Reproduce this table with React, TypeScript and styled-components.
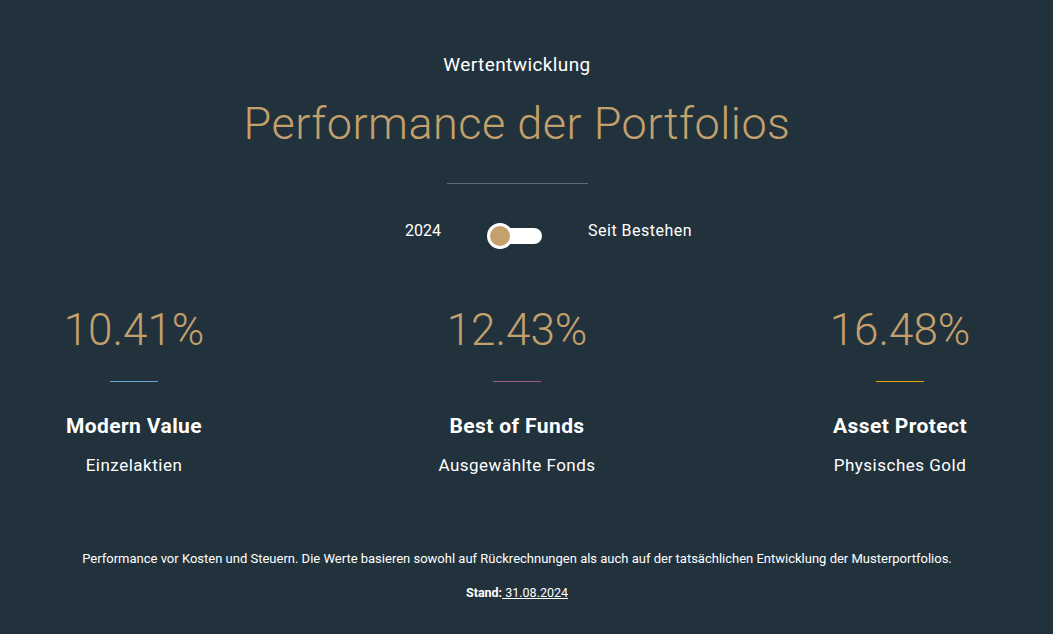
import React, { useState } from "react";
import styled, { createGlobalStyle } from "styled-components";

const GlobalStyle = createGlobalStyle`
  html, body {
    margin: 0;
    padding: 0;
    background: #22323d;
  }
  body {
    font-family: Roboto, "Noto Sans", sans-serif;
    color: #ffffff;
  }
`;

const Page = styled.main`
  width: 1034px;
  height: 634px;
  box-sizing: border-box;
  padding-top: 52px;
  display: flex;
  flex-direction: column;
  align-items: center;
  background: #22323d;
`;

const Eyebrow = styled.div`
  font-size: 19px;
  line-height: 26px;
  font-weight: 400;
  letter-spacing: 0.4px;
  color: #ffffff;
`;

const Title = styled.h1`
  margin: 18px 0 0;
  font-size: 45px;
  line-height: 56px;
  font-weight: 300;
  color: #c4a06c;
  letter-spacing: 0.5px;
`;

const Divider = styled.div`
  width: 141px;
  height: 1px;
  margin-top: 31px;
  background: #5d6b73;
`;

const ToggleRow = styled.div`
  margin-top: 39px;
  width: 100%;
  box-sizing: border-box;
  padding-right: 5px;
  display: grid;
  grid-template-columns: 1fr auto 1fr;
  align-items: start;
  font-size: 16px;
`;

const ToggleLabel = styled.span<{ $side: "left" | "right" }>`
  color: #ffffff;
  line-height: 16px;
  justify-self: ${(p) => (p.$side === "left" ? "end" : "start")};
  letter-spacing: ${(p) => (p.$side === "left" ? "0" : "0.5px")};
`;

const Switch = styled.button`
  position: relative;
  width: 56px;
  height: 26px;
  margin: 0 45px 0 46px;
  padding: 0;
  border: none;
  background: transparent;
  cursor: pointer;

  &::before {
    content: "";
    position: absolute;
    left: 1px;
    right: 1px;
    top: 5px;
    height: 16px;
    border-radius: 8px;
    background: #ffffff;
  }
`;

const Knob = styled.span<{ $on: boolean }>`
  position: absolute;
  top: 0;
  left: ${(p) => (p.$on ? "30px" : "0px")};
  width: 20px;
  height: 20px;
  border-radius: 50%;
  border: 3px solid #ffffff;
  background: #c4a06c;
  transition: left 0.2s;
`;

const Stats = styled.section`
  margin-top: 54px;
  width: 100%;
  box-sizing: border-box;
  padding: 0 14px;
  display: grid;
  grid-template-columns: repeat(3, 240px);
  column-gap: 143px;
`;

const Stat = styled.div`
  display: flex;
  flex-direction: column;
  align-items: center;
`;

const Value = styled.div`
  font-size: 44px;
  line-height: 54px;
  font-weight: 300;
  color: #c4a06c;
`;

const accentColors = {
  blue: "#6aa3d8",
  plum: "#a05a82",
  gold: "#e8a600",
};

const Accent = styled.div<{ $tone: keyof typeof accentColors }>`
  width: 48px;
  height: 1px;
  margin-top: 24px;
  background: ${(p) => accentColors[p.$tone]};
`;

const Name = styled.div`
  margin-top: 31px;
  font-size: 21px;
  line-height: 26px;
  font-weight: 700;
  letter-spacing: 0.4px;
`;

const Sub = styled.div`
  margin-top: 14px;
  font-size: 17px;
  line-height: 24px;
  font-weight: 400;
  letter-spacing: 0.5px;
`;

const Note = styled.p`
  margin: 73px 0 0;
  font-size: 13px;
  line-height: 18px;
  color: #ffffff;
`;

const Stand = styled.p`
  margin: 16px 0 0;
  font-size: 12.5px;
  line-height: 18px;

  strong {
    font-weight: 700;
  }
  span {
    text-decoration: underline;
  }
`;

const stats: { value: string; name: string; sub: string; tone: keyof typeof accentColors }[] = [
  { value: "10.41%", name: "Modern Value", sub: "Einzelaktien", tone: "blue" },
  { value: "12.43%", name: "Best of Funds", sub: "Ausgewählte Fonds", tone: "plum" },
  { value: "16.48%", name: "Asset Protect", sub: "Physisches Gold", tone: "gold" },
];

export default function App() {
  const [on, setOn] = useState(false);
  return (
    <>
      <GlobalStyle />
      <Page>
        <Eyebrow>Wertentwicklung</Eyebrow>
        <Title>Performance der Portfolios</Title>
        <Divider />
        <ToggleRow>
          <ToggleLabel $side="left">2024</ToggleLabel>
          <Switch onClick={() => setOn(!on)} aria-label="Zeitraum umschalten">
            <Knob $on={on} />
          </Switch>
          <ToggleLabel $side="right">Seit Bestehen</ToggleLabel>
        </ToggleRow>
        <Stats>
          {stats.map((s) => (
            <Stat key={s.name}>
              <Value>{s.value}</Value>
              <Accent $tone={s.tone} />
              <Name>{s.name}</Name>
              <Sub>{s.sub}</Sub>
            </Stat>
          ))}
        </Stats>
        <Note>
          Performance vor Kosten und Steuern. Die Werte basieren sowohl auf Rückrechnungen als auch auf der tatsächlichen Entwicklung der Musterportfolios.
        </Note>
        <Stand>
          <strong>Stand:</strong>
          <span> 31.08.2024</span>
        </Stand>
      </Page>
    </>
  );
}
